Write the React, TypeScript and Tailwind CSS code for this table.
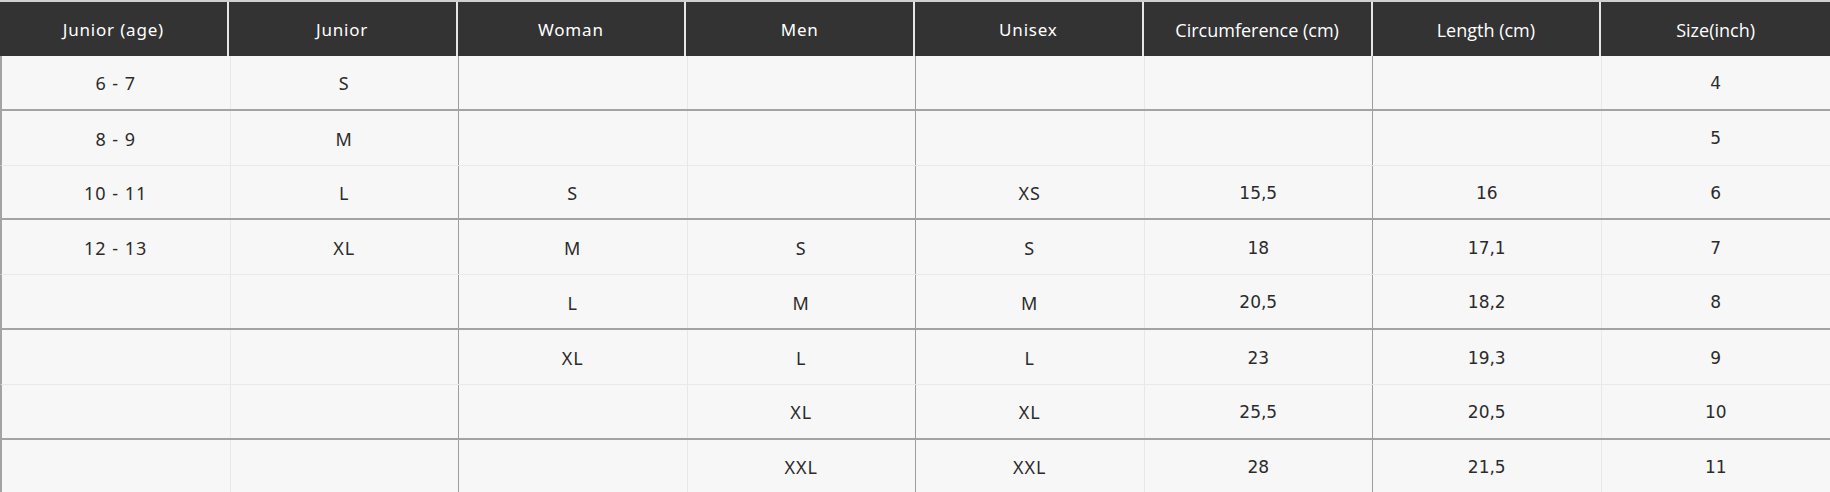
import React from "react";

const headers = [
  "Junior (age)",
  "Junior",
  "Woman",
  "Men",
  "Unisex",
  "Circumference (cm)",
  "Length (cm)",
  "Size(inch)",
];

const rows: string[][] = [
  ["6 - 7", "S", "", "", "", "", "", "4"],
  ["8 - 9", "M", "", "", "", "", "", "5"],
  ["10 - 11", "L", "S", "", "XS", "15,5", "16", "6"],
  ["12 - 13", "XL", "M", "S", "S", "18", "17,1", "7"],
  ["", "", "L", "M", "M", "20,5", "18,2", "8"],
  ["", "", "XL", "L", "L", "23", "19,3", "9"],
  ["", "", "", "XL", "XL", "25,5", "20,5", "10"],
  ["", "", "", "XXL", "XXL", "28", "21,5", "11"],
];

const App: React.FC = () => {
  return (
    <div className="w-[1830px] h-[492px] overflow-hidden bg-[#f7f7f7]">
      {/* header */}
      <div className="grid grid-cols-8 border-t-2 border-[#d0d0d0] bg-[#333333] h-[56px]">
        {headers.map((h, i) => (
          <div
            key={h}
            className={
              "flex items-center justify-center pt-[2px] text-white " +
              (i < 7 ? "border-r-2 border-[#e6e6e6] " : "") +
              (i >= 5
                ? "font-['Open_Sans',sans-serif] text-[18px]"
                : "font-['Noto_Sans',sans-serif] text-[17px] tracking-[0.8px]")
            }
          >
            {h}
          </div>
        ))}
      </div>

      {/* body */}
      {rows.map((r, ri) => (
        <div
          key={ri}
          className={
            "grid grid-cols-8 h-[54.8px] border-l-2 " +
            (ri % 2 === 0 ? "border-b-2 border-b-[#a3a3a3] " : "border-b border-b-[#e9e9e9] ") +
            "border-l-[#a3a3a3]"
          }
        >
          {r.map((c, ci) => (
            <div
              key={ci}
              className={
                "flex items-center justify-center pt-[3px] text-[#2b2b2b] " +
                (ci === 7 ? "" : ci % 2 === 1 ? "border-r border-[#9d9d9d] " : "border-r border-[#e8e8e8] ") +
                (ci >= 5
                  ? "font-['DejaVu_Sans',sans-serif] text-[17px]"
                  : "font-['Noto_Sans',sans-serif] text-[18px] tracking-[1px]")
              }
            >
              {c}
            </div>
          ))}
        </div>
      ))}
    </div>
  );
};

export default App;
